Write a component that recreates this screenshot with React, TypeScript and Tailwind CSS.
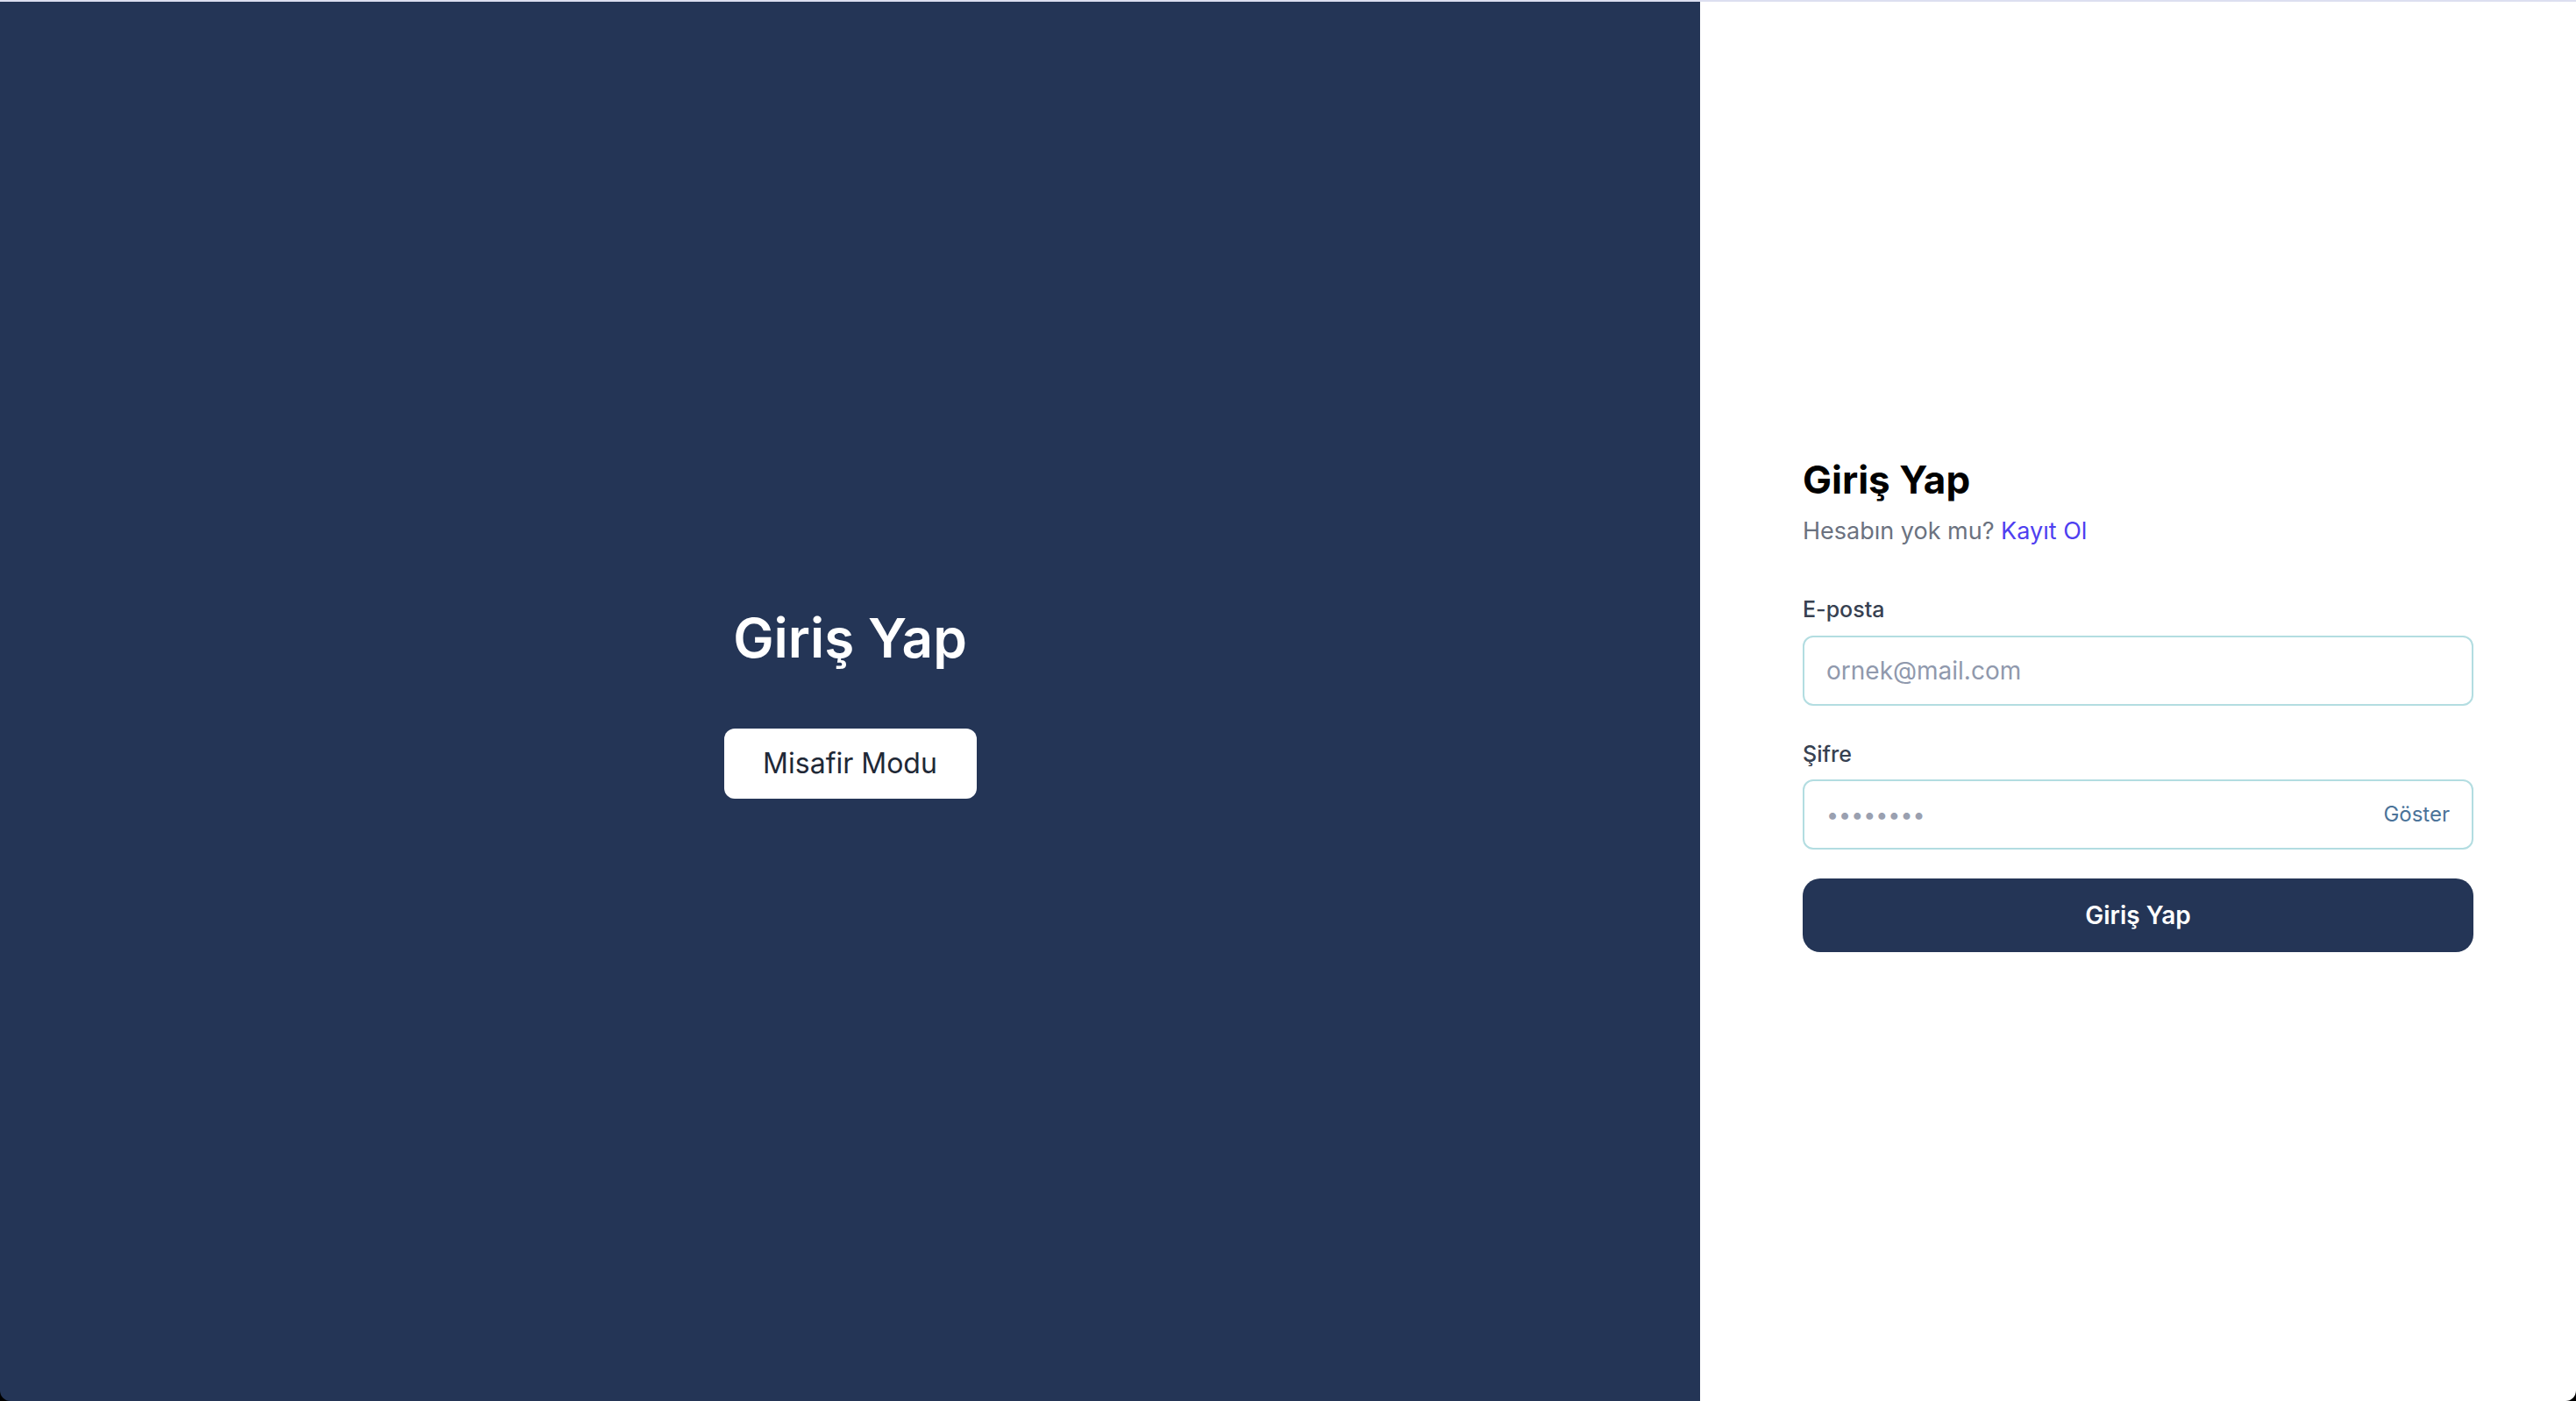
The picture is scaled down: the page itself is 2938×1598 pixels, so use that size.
import React from "react";

export default function App() {
  return (
    <div className="h-[1598px] w-full bg-black" style={{ fontFamily: "Inter, 'Noto Sans', sans-serif" }}>
      <div className="flex h-full w-full flex-col overflow-hidden rounded-b-[12px]">
        <div className="h-[2px] w-full bg-[#dcdff0]" />
        <div className="flex flex-1">
          <div className="flex w-[1939px] flex-col items-center justify-center bg-[#243556]">
            <h1 className="mb-[64px] text-[62px] font-semibold leading-[1.25] text-white">Giriş Yap</h1>
            <button className="flex h-[80px] w-[288px] items-center justify-center rounded-[12px] bg-white text-[32px] font-normal text-[#1f2937]">
              Misafir Modu
            </button>
          </div>
          <div className="flex flex-1 flex-col justify-center bg-white px-[117px] pt-[7px]">
            <h2 className="text-[44px] font-bold leading-[52px] text-black">Giriş Yap</h2>
            <p className="mt-[15px] text-[27px] leading-[36px] text-[#6b7280]">
              Hesabın yok mu? <a className="text-[#4f3ff0]">Kayıt Ol</a>
            </p>
            <label className="mt-[55px] mb-[14px] block text-[25px] font-medium leading-[32px] text-[#374151]">E-posta</label>
            <input
              className="h-[80px] w-full rounded-[12px] border-2 border-[#b3dde1] px-[25px] text-[28px] text-[#374151] outline-none placeholder:text-[#9099ad]"
              placeholder="ornek@mail.com"
            />
            <label className="mt-[39px] mb-[13px] block text-[25px] font-medium leading-[32px] text-[#374151]">Şifre</label>
            <div className="relative">
              <input
                className="h-[80px] w-full rounded-[12px] border-2 border-[#b3dde1] px-[25px] text-[25px] text-[#374151] outline-none placeholder:text-[#9aa0b0]"
                placeholder="••••••••"
              />
              <span className="absolute right-[27px] top-1/2 -translate-y-1/2 text-[24px] text-[#4b7399]">Göster</span>
            </div>
            <button className="mt-[33px] flex h-[84px] w-full items-center justify-center rounded-[20px] bg-[#243556] text-[28px] font-semibold text-white">
              Giriş Yap
            </button>
          </div>
        </div>
      </div>
    </div>
  );
}
